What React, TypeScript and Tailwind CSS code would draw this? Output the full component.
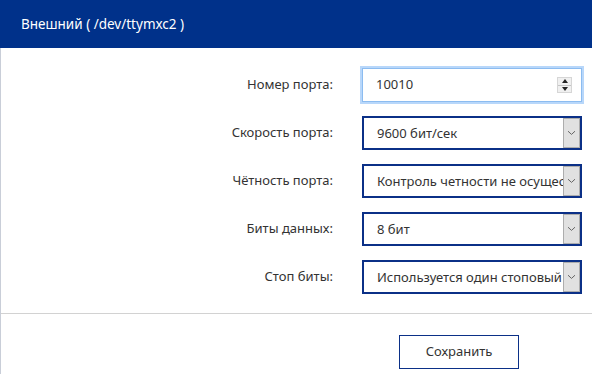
import { useState } from 'react';

const selects = [
  { label: 'Скорость порта:', value: '9600 бит/сек' },
  { label: 'Чётность порта:', value: 'Контроль четности не осуществляется' },
  { label: 'Биты данных:', value: '8 бит' },
  { label: 'Стоп биты:', value: 'Используется один стоповый бит' },
];

function Chevron() {
  return (
    <svg width="9" height="6" viewBox="0 0 9 6" fill="none">
      <path d="M1 1.2 L4.5 4.4 L8 1.2" stroke="#666" strokeWidth="1" />
    </svg>
  );
}

function SelectBox({ value }: { value: string }) {
  return (
    <div className="relative h-[34px] w-[220px] border-2 border-[#0b3087] bg-white">
      <div className="h-full overflow-hidden whitespace-nowrap pl-[13px] pr-[18px] text-[13px] leading-[30px] text-[#333]">
        {value}
      </div>
      <div className="absolute right-0 top-0 flex h-full w-[17px] items-center justify-center border border-[#adadad] bg-[#e1e1e1]">
        <Chevron />
      </div>
    </div>
  );
}

function NumberBox({ value }: { value: string }) {
  return (
    <div className="relative flex h-[34px] w-[220px] items-center border border-[#8cbcf0] bg-white pl-[13px] text-[13px] text-[#333] shadow-[0_0_0_2px_#b8d7fa]">
      {value}
      <div className="absolute right-[9px] top-[8px] flex h-[16px] w-[15px] flex-col border border-[#d6d6d6] bg-[#f0f0f0]">
        <div className="flex flex-1 items-center justify-center border-b border-[#c4c4c4]">
          <div className="h-0 w-0 border-x-[3.5px] border-b-[4px] border-x-transparent border-b-[#222]" />
        </div>
        <div className="flex flex-1 items-center justify-center">
          <div className="h-0 w-0 border-x-[3.5px] border-t-[4px] border-x-transparent border-t-[#222]" />
        </div>
      </div>
    </div>
  );
}

export default function App() {
  const [port] = useState('10010');

  return (
    <div className="flex h-[374px] w-[592px] flex-col overflow-hidden bg-white font-['Noto_Sans','Open_Sans',sans-serif]">
      <div className="flex h-[48px] shrink-0 items-center bg-[#00318a] pl-[21px] text-[13.5px] text-white">
        Внешний ( /dev/ttymxc2 )
      </div>

      <div className="flex flex-1 flex-col border-l border-[#c9ced8]">
        <div className="grid grid-cols-[1fr_220px] items-center gap-x-[29px] gap-y-[14px] pr-[10px] pt-[20px]">
          <div className="text-right text-[13px] text-[#333]">Номер порта:</div>
          <NumberBox value={port} />
          {selects.map((s) => (
            <div key={s.label} className="contents">
              <div className="text-right text-[13px] text-[#333]">{s.label}</div>
              <SelectBox value={s.value} />
            </div>
          ))}
        </div>

        <div className="mt-[19px] border-t border-[#d2d2d2]" />

        <div className="flex justify-end pr-[73px] pt-[21px]">
          <button className="h-[34px] w-[120px] border border-[#0b3087] bg-white text-[13px] text-[#333]">
            Сохранить
          </button>
        </div>
      </div>
    </div>
  );
}
